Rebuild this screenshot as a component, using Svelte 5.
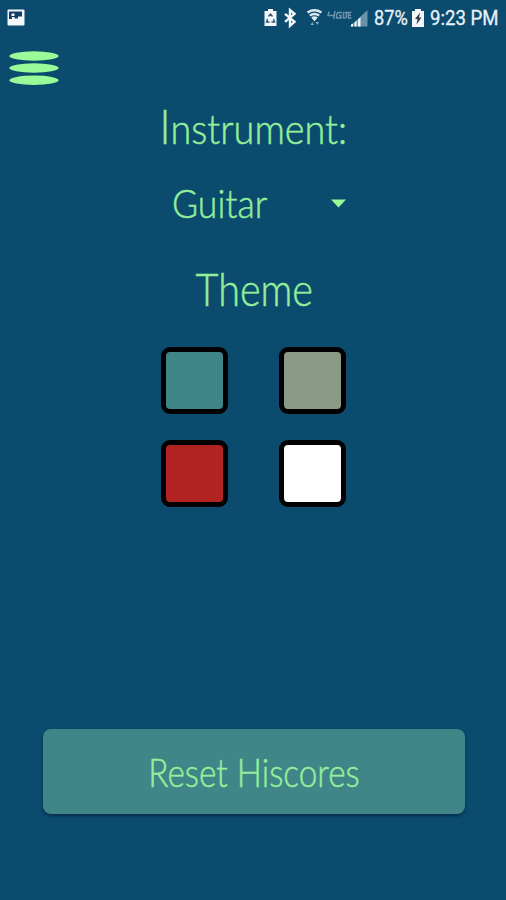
<script>
    const themes = [
        { name: 'Teal', color: '#408587' },
        { name: 'Sage', color: '#8a9a87' },
        { name: 'Red', color: '#b32322' },
        { name: 'White', color: '#ffffff' }
    ];

    let instrument = $state('Guitar');
    let selected = $state(null);
</script>

<div class="screen">
    <header class="status">
        <svg class="picture" width="18" height="17" viewBox="0 0 18 17">
            <rect x="0.5" y="0.5" width="17" height="16" rx="1" fill="#f4f8fc" />
            <path d="M2 2.5h13v5h-4v2H7.500v-1.500H5v2H2z" fill="#123f68" />
            <rect x="4.500" y="4.500" width="3" height="2.500" fill="#f4f8fc" />
        </svg>

        <div class="indicators">
            <svg width="105" height="22" viewBox="0 0 105 22">
                <!-- Battery saver -->
                <path d="M0.5 4H4V2h5v2h3.5v15H0.5z" fill="#f4f8fc" />
                <path d="M4.5 9.5 6.5 7l2 2.5M9.5 12l1 3H7.5M5.5 15H2.5l1-3" fill="none" stroke="#31546b" stroke-width="1.4" />
                <!-- Bluetooth -->
                <path d="m21 6.8 9.5 8-4.5 4V3l4.5 3.8-9.5 8" fill="none" stroke="#f4f8fc" stroke-width="2.4" />
                <!-- Wifi -->
                <path d="M43.5 5.5q7-4.5 14 0M45.8 8.5q4.7-3 9.4 0M48 11.3q2.500-1.600 5 0" fill="none" stroke="#dce8f0" stroke-width="2.3" />
                <path d="M48.5 11.500h4l-2 3z" fill="#f4f8fc" />
                <path d="M46.500 18l1.800-3 1.800 3zM51.500 15h3.600l-1.800 3z" fill="#86a9c0" />
                <!-- 4G LTE -->
                <path d="M65 4.500l-1 4h6M71 4l-1.500 8M78 5.500h-4l-1.500 2v3.500h4.500v-2.500h-2M79.500 5v6h2M80.500 5.500h3.500M82.300 5.500v5.500M87.500 5.500h-3v5.500h3M84.500 8.200h2.500" fill="none" stroke="#6e94ad" stroke-width="1.4" />
                <!-- Signal -->
                <path d="M86 19.500 103.500 3v16.500z" fill="#6893ab" />
                <path d="M87 19.500v-2l2-1v3zM90.500 19.500v-4l2-2v6zM94 19.500v-7l2.500-2.500v9.500z" fill="#f4f8fc" />
            </svg>
            <span class="percent">87%</span>
            <svg class="battery" width="12" height="18" viewBox="0 0 12 18">
                <path d="M0 2h3V0h6v2h3v16H0z" fill="#f4f8fc" />
                <path d="M8 3.5 3 10h2.5L4.5 15.5 9.5 8.5H7z" fill="#333b40" />
            </svg>
            <span class="time">9:23 PM</span>
        </div>
    </header>

    <button class="menu" aria-label="Menu">
        <svg width="50" height="36" viewBox="0 0 50 36">
            <ellipse cx="25" cy="5" rx="24.7" ry="4.7" />
            <ellipse cx="25" cy="17" rx="24.7" ry="4.7" />
            <ellipse cx="25" cy="29.2" rx="24.7" ry="4.7" />
        </svg>
    </button>

    <main>
        <h1 class="instrument-title">Instrument:</h1>

        <button class="picker">
            <span class="choice">{instrument}</span>
            <svg width="15" height="9" viewBox="0 0 15 9"><path d="M0 0.5h15L7.5 8.5z" /></svg>
        </button>

        <h1 class="theme-title">Theme</h1>

        <div class="swatches">
            {#each themes as theme, i}
                <button
                    class="swatch"
                    aria-label={theme.name}
                    aria-pressed={selected === i}
                    style="background-color: {theme.color}"
                    onclick={() => (selected = i)}
                ></button>
            {/each}
        </div>
    </main>

    <button class="reset"><span class="reset-label">Reset Hiscores</span></button>
</div>

<style>
    :global(body) {
        margin: 0;
        background: #0a4b6e;
    }

    .screen {
        display: flex;
        flex-direction: column;
        width: 506px;
        height: 900px;
        overflow: hidden;
        background: #0a4b6e;
        color: #94ee9a;
        font-family: Lato, 'Open Sans', sans-serif;
        font-weight: 300;
    }

    button {
        padding: 0;
        border: 0;
        background: none;
        color: inherit;
        font: inherit;
        cursor: pointer;
    }

    svg {
        display: block;
        flex: none;
    }

    .status {
        display: flex;
        justify-content: space-between;
        height: 36px;
        padding: 0 8px 0 7px;
        color: #e8f1f8;
        font-family: Roboto, sans-serif;
        font-size: 20px;
        font-weight: 400;
    }

    .picture {
        margin-top: 9px;
    }

    .indicators {
        display: flex;
        align-items: center;
    }

    .indicators span {
        white-space: nowrap;
        -webkit-text-stroke: 0.3px currentColor;
    }

    /* Condensed text: the box keeps the drawn width, the glyphs scale into it */
    .percent {
        width: 34px;
        margin-left: 5px;
        transform: scaleX(0.91);
        transform-origin: left;
    }

    .battery {
        margin: 0 6px 0 4px;
    }

    .time {
        width: 68px;
        transform: scaleX(0.93);
        transform-origin: left;
    }

    .menu {
        width: 50px;
        height: 36px;
        margin: 15px 0 0 9px;
    }

    .menu svg,
    .picker svg {
        fill: #98fb98;
    }

    main {
        display: flex;
        flex-direction: column;
        align-items: center;
    }

    h1,
    .choice,
    .reset-label {
        -webkit-text-stroke: 0.5px currentColor;
    }

    h1 {
        margin: 0;
        height: 56px;
        font-size: 46px;
        font-weight: 300;
        line-height: 56px;
        white-space: nowrap;
    }

    .instrument-title {
        margin-top: 11px;
        font-size: 42px;
        transform: scaleX(0.9);
    }

    .instrument-title::first-letter {
        font-size: 47px;
    }

    .picker {
        display: flex;
        align-items: center;
        justify-content: space-between;
        width: 174px;
        height: 50px;
        margin-top: 24px;
        font-size: 40px;
    }

    .choice {
        margin-left: 6px;
        transform: scaleX(0.89);
        transform-origin: left;
    }

    .picker svg {
        margin: 0 -6px 0 0;
    }

    .theme-title {
        margin-top: 33px;
        transform: translateX(1px) scaleX(0.86);
    }

    .swatches {
        display: grid;
        grid-template-columns: 67px 67px;
        gap: 26px 51px;
        margin-top: 30px;
    }

    .swatch {
        box-sizing: border-box;
        width: 67px;
        height: 67px;
        border: 5px solid #000;
        border-radius: 9px;
    }

    .reset {
        width: 422px;
        height: 85px;
        margin: auto 0 86px 43px;
        border-radius: 8px;
        background: #408587;
        box-shadow: 0 2px 3px rgba(0, 20, 40, 0.5);
        font-size: 39px;
    }

    .reset-label {
        display: block;
        transform: scaleX(0.855);
    }
</style>
